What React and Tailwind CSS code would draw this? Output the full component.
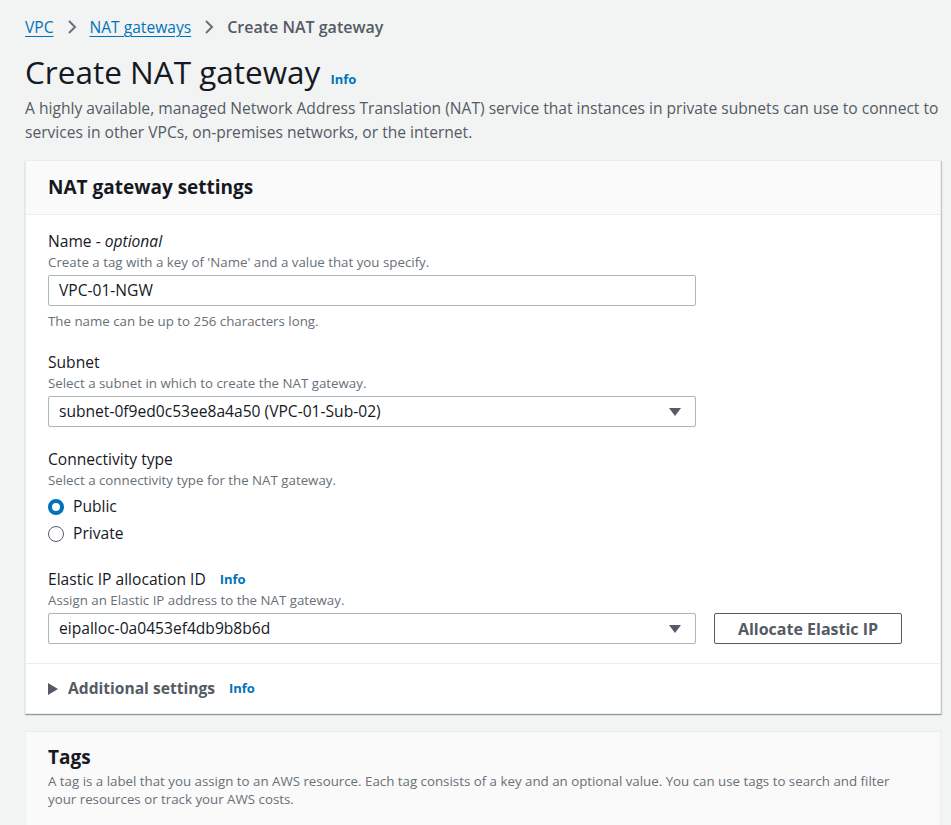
import React from 'react';

const font = { fontFamily: '"Open Sans", "Noto Sans", sans-serif' };

function Info({ className = '' }) {
  return <span className={`text-[13px] font-bold text-[#0073bb] ${className}`}>Info</span>;
}

function Caret() {
  return (
    <svg width="12" height="8" viewBox="0 0 12 8" className="shrink-0">
      <path d="M0 0 L12 0 L6 8 Z" fill="#545b64" />
    </svg>
  );
}

function Chevron() {
  return (
    <svg width="10" height="16" viewBox="0 0 10 16" className="mx-[5px]">
      <path d="M2 2 L8 8 L2 14" fill="none" stroke="#687078" strokeWidth="2" />
    </svg>
  );
}

function Field({ label, desc, children, info }) {
  return (
    <div>
      <div className="flex items-center gap-[14px] text-[15.6px] leading-[20px] text-[#16191f]">
        {label}
        {info && <Info />}
      </div>
      <div className="text-[13.3px] leading-[18px] text-[#687078] mt-[2px]">{desc}</div>
      <div className="mt-[4px]">{children}</div>
    </div>
  );
}

function Select({ value }) {
  return (
    <div className="w-[648px] h-[31px] border border-[#aab7b8] rounded-[2px] bg-white flex items-center justify-between pl-[10px] pr-[14px] text-[15.6px] text-[#16191f]">
      <span>{value}</span>
      <Caret />
    </div>
  );
}

function Radio({ checked, label }) {
  return (
    <div className="flex items-center gap-[9px] h-[27px] text-[15.6px] text-[#16191f]">
      {checked ? (
        <span className="w-[16px] h-[16px] rounded-full border-[4.5px] border-[#0073bb] bg-white" />
      ) : (
        <span className="w-[16px] h-[16px] rounded-full border-[1.5px] border-[#545b64] bg-white" />
      )}
      {label}
    </div>
  );
}

export default function App() {
  return (
    <div className="h-[825px] overflow-hidden bg-[#f2f3f3] pl-[25px] pr-[10px] pt-[15px]" style={font}>
      <nav className="flex items-center gap-[8px] text-[15.6px] leading-[24px]">
        <a className="text-[#0073bb] underline underline-offset-[3px]">VPC</a>
        <Chevron />
        <a className="text-[#0073bb] underline underline-offset-[3px]">NAT gateways</a>
        <Chevron />
        <span className="text-[#545b64] font-semibold text-[16px]">Create NAT gateway</span>
      </nav>

      <div className="mt-[14px] flex items-baseline gap-[10px]">
        <h1 className="text-[31.5px] leading-[38px] text-[#16191f]">Create NAT gateway</h1>
        <Info />
      </div>
      <p className="mt-[5px] text-[15.6px] leading-[24px] text-[#545b64]">
        A highly available, managed Network Address Translation (NAT) service that instances in private subnets can use to connect to services in other VPCs, on-premises networks, or the internet.
      </p>

      <section className="mt-[16px] w-[916px] bg-white border border-[#eaeded] shadow-[0_1px_1px_0_rgba(0,28,36,0.3),1px_1px_1px_0_rgba(0,28,36,0.15)]">
        <div className="bg-[#fafafa] border-b border-[#eaeded] h-[54px] flex items-center px-[22px]">
          <h2 className="text-[19px] font-bold text-[#16191f]">NAT gateway settings</h2>
        </div>
        <div className="px-[22px] pt-[16px] pb-[19px] flex flex-col gap-[22px]">
          <div>
            <Field label={<span>Name - <i>optional</i></span>} desc="Create a tag with a key of 'Name' and a value that you specify.">
              <div className="w-[648px] h-[31px] border border-[#aab7b8] rounded-[2px] bg-white flex items-center pl-[10px] text-[15.6px] text-[#16191f]">
                VPC-01-NGW
              </div>
            </Field>
            <div className="text-[13.3px] leading-[18px] text-[#687078] mt-[6px]">The name can be up to 256 characters long.</div>
          </div>

          <Field label="Subnet" desc="Select a subnet in which to create the NAT gateway.">
            <Select value="subnet-0f9ed0c53ee8a4a50 (VPC-01-Sub-02)" />
          </Field>

          <Field label="Connectivity type" desc="Select a connectivity type for the NAT gateway.">
            <Radio checked label="Public" />
            <Radio label="Private" />
          </Field>

          <Field label="Elastic IP allocation ID" info desc="Assign an Elastic IP address to the NAT gateway.">
            <div className="flex items-center gap-[18px]">
              <Select value="eipalloc-0a0453ef4db9b8b6d" />
              <button className="w-[188px] h-[31px] border border-[#545b64] rounded-[2px] bg-white text-[16px] font-bold text-[#545b64]">
                Allocate Elastic IP
              </button>
            </div>
          </Field>
        </div>
        <div className="border-t border-[#eaeded] h-[50px] flex items-center px-[22px] gap-[10px]">
          <svg width="10" height="12" viewBox="0 0 10 12"><path d="M0 0 L10 6 L0 12 Z" fill="#545b64" /></svg>
          <span className="text-[15.6px] font-bold text-[#545b64]">Additional settings</span>
          <Info className="ml-[4px]" />
        </div>
      </section>

      <section className="mt-[17px] w-[916px] bg-[#fafafa] border border-[#eaeded] px-[22px] pt-[12px] pb-[30px]">
        <h2 className="text-[19px] font-bold text-[#16191f] leading-[26px]">Tags</h2>
        <p className="text-[13.3px] leading-[18px] text-[#687078] mt-[2px]">
          A tag is a label that you assign to an AWS resource. Each tag consists of a key and an optional value. You can use tags to search and filter your resources or track your AWS costs.
        </p>
      </section>
    </div>
  );
}
